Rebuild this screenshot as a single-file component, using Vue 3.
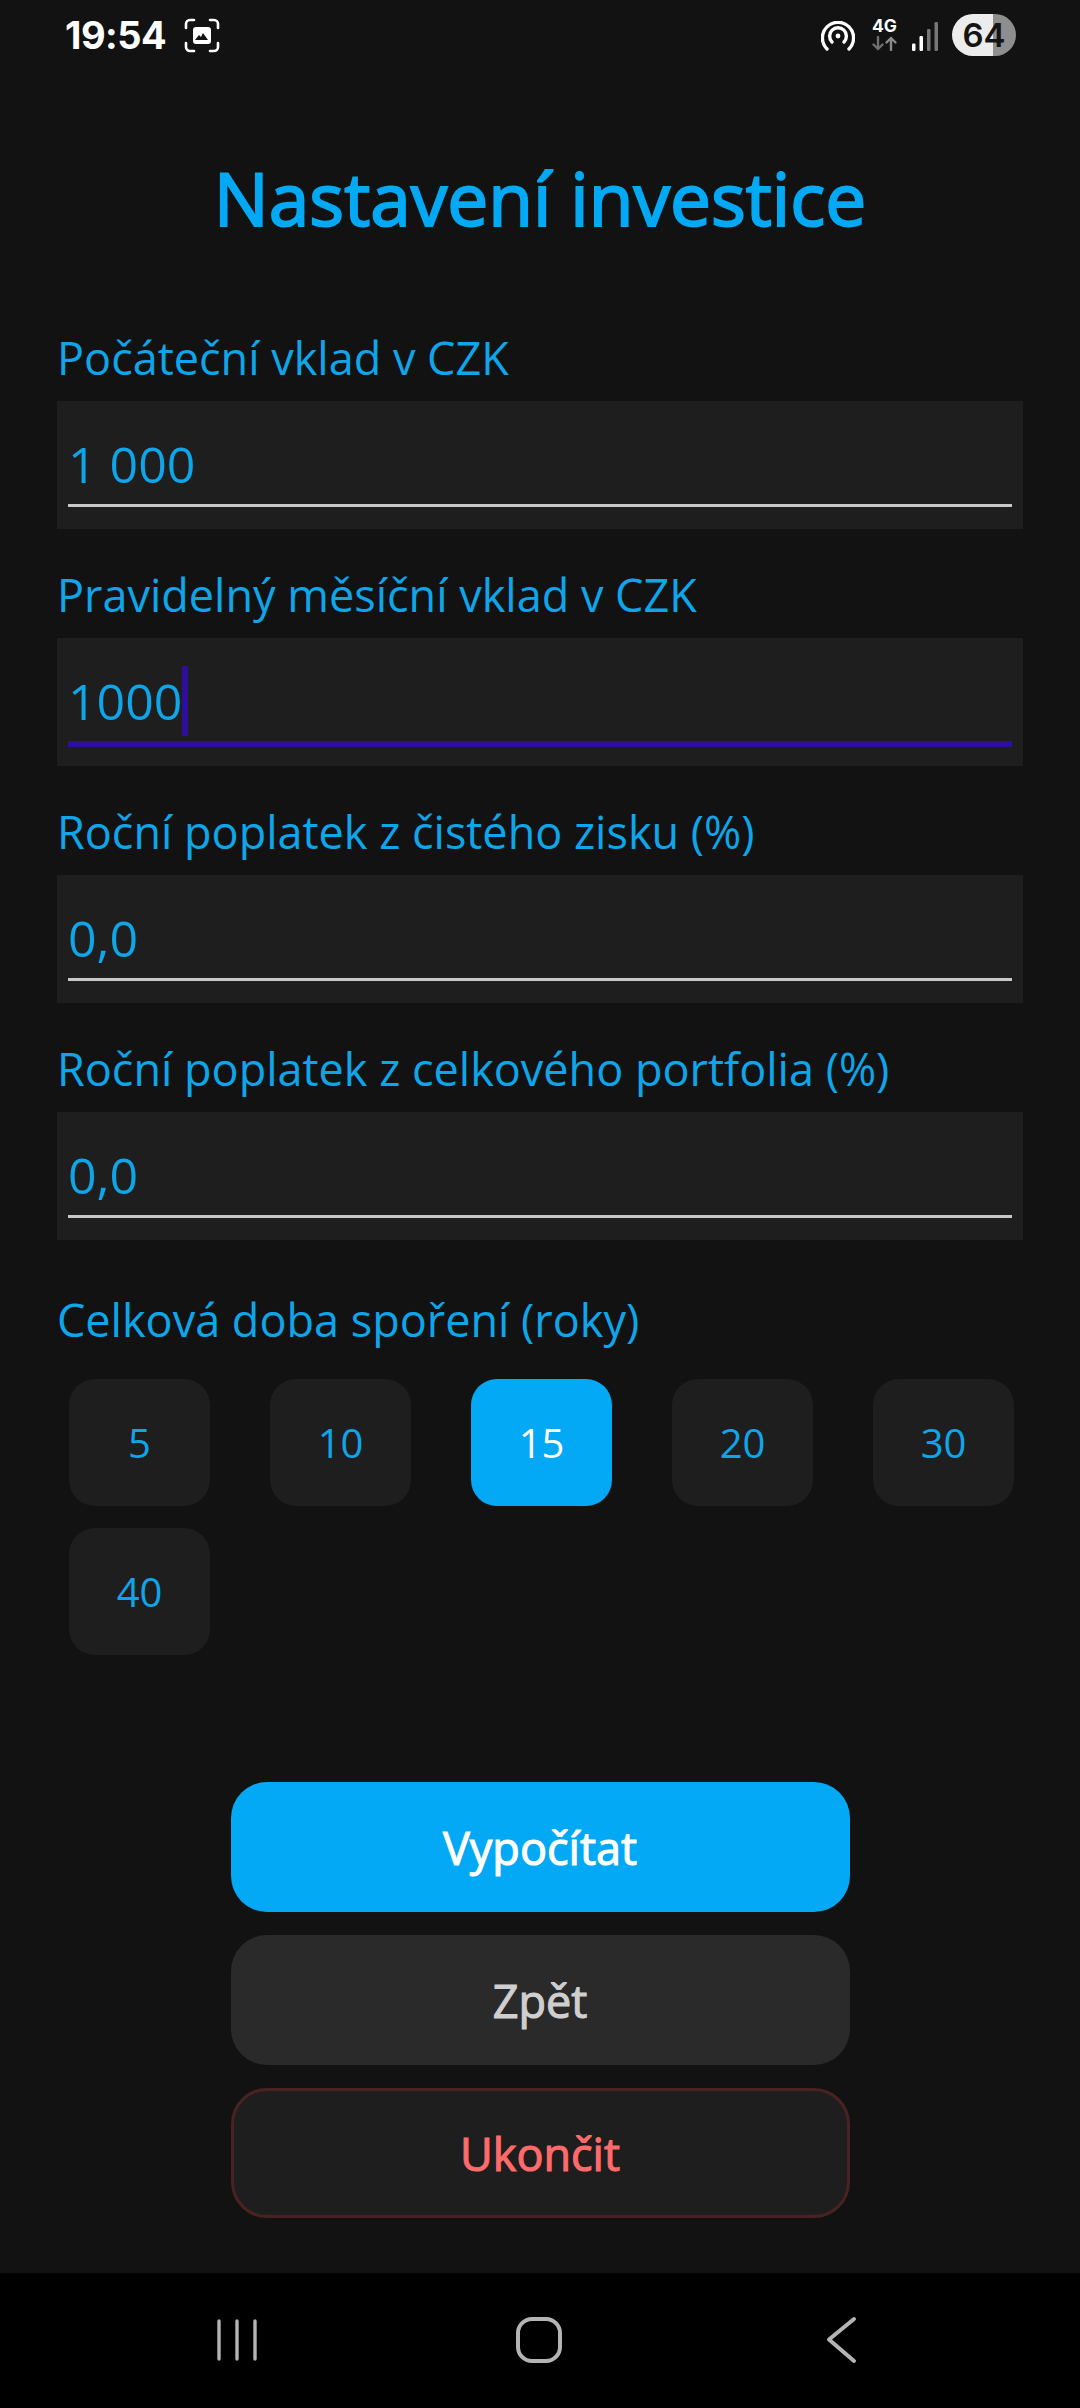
<script setup>
const fields = [
  { label: 'Počáteční vklad v CZK', value: '1 000' },
  { label: 'Pravidelný měsíční vklad v CZK', value: '1000', focused: true },
  { label: 'Roční poplatek z čistého zisku (%)', value: '0,0' },
  { label: 'Roční poplatek z celkového portfolia (%)', value: '0,0' },
]
const years = [5, 10, 15, 20, 30, 40]
const selected = 15
</script>

<template>
  <div class="page">
    <header class="status">
      <span class="time">19:54</span>
      <svg class="shot" width="36" height="35" viewBox="0 0 36 35" fill="none">
        <path d="M2 10V6a4 4 0 0 1 4-4h4M26 2h4a4 4 0 0 1 4 4v4M34 25v4a4 4 0 0 1-4 4h-4M10 33H6a4 4 0 0 1-4-4v-4" stroke="#fff" stroke-width="2.6" stroke-linecap="round" />
        <rect x="9" y="9" width="18" height="17" rx="3" fill="#fff" />
        <path d="M11 22l4-5 2 2 2-4 5 7z" fill="#121212" />
      </svg>
      <span class="spacer"></span>
      <svg class="hotspot" width="34" height="30" viewBox="0 0 34 30" fill="none" stroke="#fff" stroke-width="3.4" stroke-linecap="round">
        <path d="M6 28A15.6 15.6 0 1 1 28 28" />
        <path d="M11 21A8.4 8.4 0 1 1 23 21" />
        <circle cx="17" cy="15" r="2.4" fill="#fff" stroke="none" />
      </svg>
      <div class="net">
        <span class="net-label">4G</span>
        <svg width="25" height="15" viewBox="0 0 25 15" fill="none" stroke-width="2.4" stroke-linecap="round" stroke-linejoin="round">
          <path d="M6 1v12M1.5 8.5L6 13l4.5-4.5" stroke="#6f6f6f" />
          <path d="M19 14V2M14.5 6.500L19 2l4.500 4.500" stroke="#8a8a8a" />
        </svg>
      </div>
      <svg class="signal" width="26" height="29" viewBox="0 0 26 29">
        <rect x="0" y="21.500" width="3.500" height="7.500" rx="1.200" fill="#fff" />
        <rect x="7.500" y="14" width="3.500" height="15" rx="1.200" fill="#fff" />
        <rect x="15" y="7" width="3.500" height="22" rx="1.200" fill="#777" />
        <rect x="22.500" y="0" width="3.500" height="29" rx="1.200" fill="#777" />
      </svg>
      <span class="battery">64</span>
    </header>

    <main class="content">
      <h1 class="title">Nastavení investice</h1>

      <section v-for="f in fields" :key="f.label" class="field">
        <label class="label">{{ f.label }}</label>
        <div class="box">
          <div class="input" :class="{ focused: f.focused }">
            <span class="value">{{ f.value }}</span>
            <span v-if="f.focused" class="caret"></span>
          </div>
        </div>
      </section>

      <section class="duration">
        <label class="label">Celková doba spoření (roky)</label>
        <div class="chips">
          <button v-for="y in years" :key="y" class="chip" :class="{ active: y === selected }">{{ y }}</button>
        </div>
      </section>

      <div class="actions">
        <button class="btn primary">Vypočítat</button>
        <button class="btn secondary">Zpět</button>
        <button class="btn danger">Ukončit</button>
      </div>
    </main>

    <nav class="nav">
      <svg width="44" height="46" viewBox="0 0 44 46" stroke="#b4b4b4" stroke-width="3.400" stroke-linecap="round">
        <path d="M4 4v38M22 4v38M40 4v38" />
      </svg>
      <svg class="home" width="48" height="48" viewBox="0 0 48 48" fill="none" stroke="#b4b4b4" stroke-width="4">
        <rect x="3" y="3" width="42" height="42" rx="14" />
      </svg>
      <svg class="back" width="32" height="48" viewBox="0 0 32 48" fill="none" stroke="#b4b4b4" stroke-width="4" stroke-linecap="round" stroke-linejoin="round">
        <path d="M28 3L3 23.500 28 45" />
      </svg>
    </nav>
  </div>
</template>

<style>
body { margin: 0; background: #121212; }
</style>

<style scoped>
.page {
  width: 1080px;
  height: 2408px;
  background: #121212;
  display: flex;
  flex-direction: column;
  font-family: "Open Sans", "Noto Sans", sans-serif;
  overflow: hidden;
}
.status {
  height: 70px;
  flex: none;
  display: flex;
  align-items: center;
  padding: 0 64px 0 65px;
  box-sizing: border-box;
  color: #fff;
}
.time {
  font-family: Inter, "Liberation Sans", sans-serif;
  font-weight: 700;
  font-size: 38px;
  line-height: 70px;
  width: 119px;
  letter-spacing: -0.5px;
}
.spacer { flex: 1; }
.hotspot { margin-top: 2px; }
.net {
  width: 25px;
  margin-left: 17px;
  display: flex;
  flex-direction: column;
  align-items: center;
  gap: 3px;
}
.net-label {
  font-family: Inter, "Liberation Sans", sans-serif;
  font-weight: 700;
  font-size: 17.500px;
  line-height: 14px;
}
.signal { margin: 2px 0 0 15px; }
.battery {
  margin-left: 14px;
  width: 64px;
  height: 42px;
  border-radius: 21px;
  background: linear-gradient(90deg, #ececec 64%, #8e8e8e 64%);
  color: #141414;
  font-family: Inter, "Liberation Sans", sans-serif;
  font-size: 33px;
  font-weight: 600;
  line-height: 42px;
  text-align: center;
}
.content {
  flex: 1;
  padding: 0 57px;
}
.title {
  margin: 78px 0 79px;
  color: #03a9f4;
  font-size: 73px;
  font-weight: 400;
  -webkit-text-stroke: 2px #03a9f4;
  line-height: 100px;
  text-align: center;
}
.field { margin-bottom: 35px; }
.label {
  display: block;
  height: 60px;
  margin-bottom: 14px;
  color: #0ea5e9;
  font-size: 45px;
  line-height: 62px;
}
.box {
  height: 128px;
  background: #1e1e1e;
  padding: 0 11px;
  box-sizing: border-box;
}
.input {
  height: 106px;
  box-sizing: border-box;
  border-bottom: 3px solid #c8c8c8;
  display: flex;
  align-items: center;
  padding-top: 22px;
}
.input.focused {
  height: 109px;
  border-bottom: 6px solid #2e0f9c;
}
.value {
  color: #0ea5e9;
  font-size: 50px;
  line-height: 70px;
}
.caret {
  width: 6px;
  height: 70px;
  background: #2e0f9c;
}
.duration { padding-top: 14px; }
.duration .label { margin-bottom: 30px; }
.chips {
  display: grid;
  grid-template-columns: repeat(5, 141px);
  column-gap: 60px;
  row-gap: 22px;
  padding-left: 12px;
}
.chip {
  height: 127px;
  border: 0;
  border-radius: 26px;
  background: #1e1e1e;
  color: #0ea5e9;
  font-family: inherit;
  font-size: 40px;
  padding: 0;
}
.chip.active {
  background: #03a9f4;
  color: #fff;
}
.actions {
  margin-top: 127px;
  display: flex;
  flex-direction: column;
  align-items: center;
  gap: 23px;
}
.btn {
  width: 619px;
  height: 130px;
  border: 0;
  border-radius: 36px;
  font-family: inherit;
  font-size: 45px;
  font-weight: 400;
  padding: 0;
  -webkit-text-stroke: 1.100px currentColor;
}
.primary { background: #03a9f4; color: #fff; }
.secondary { background: #2a2a2a; color: #cfcfcf; }
.danger {
  background: #1e1e1e;
  color: #ff6b6b;
  border: 3px solid #4a2222;
}
.nav {
  height: 135px;
  flex: none;
  background: #000;
  display: flex;
  align-items: center;
  padding: 0 0 2px 215px;
  box-sizing: border-box;
}
.home { margin-left: 256px; }
.back { margin-left: 263px; }
</style>
